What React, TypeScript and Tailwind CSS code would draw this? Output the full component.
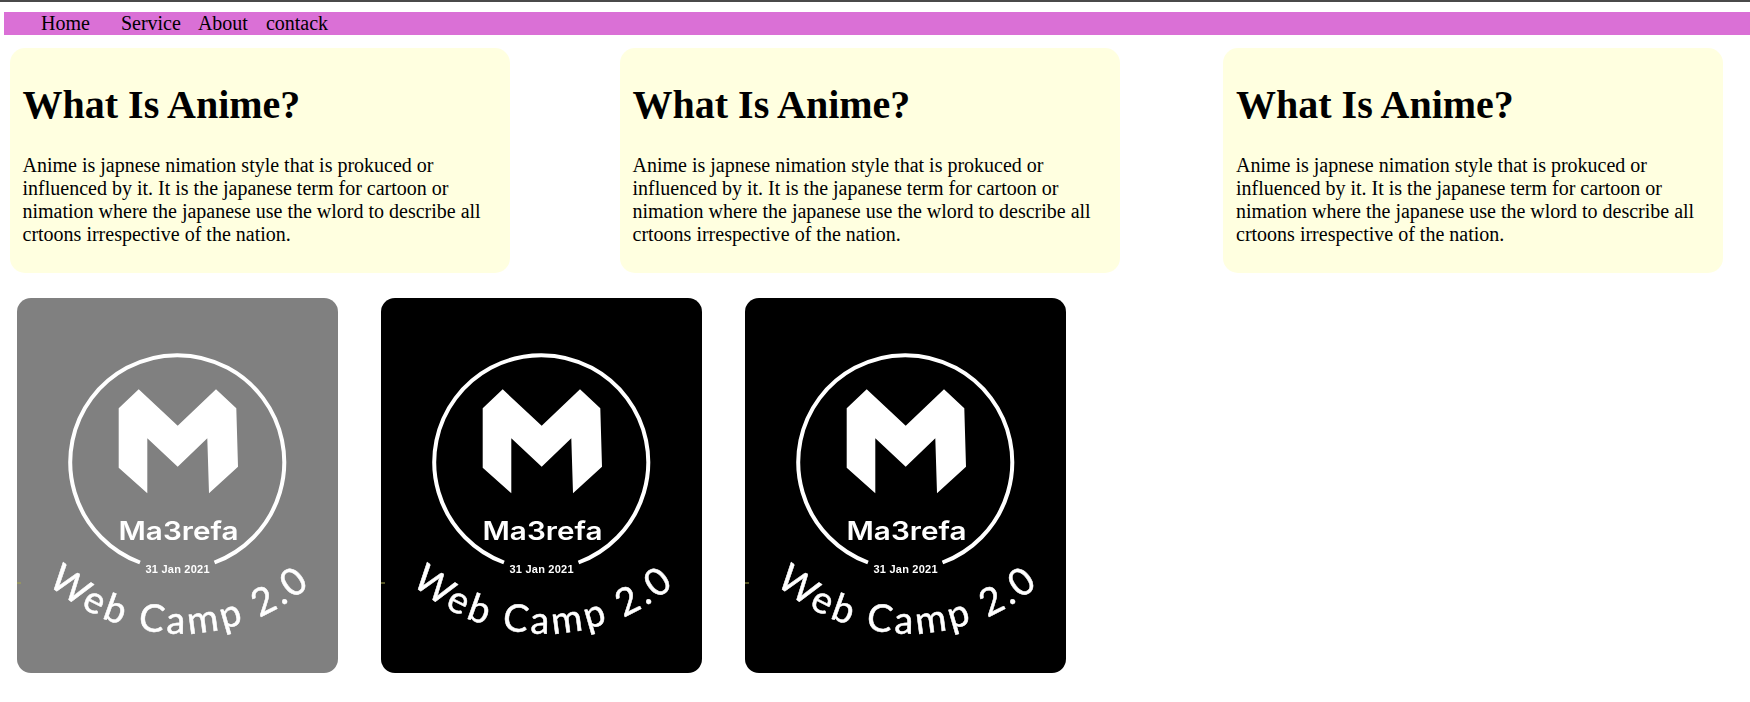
const navItems = [
  { label: "Home", className: "ml-[37px] mr-[31px]" },
  { label: "Service", className: "mr-[17px]" },
  { label: "About", className: "mr-[18px]" },
  { label: "contack", className: "" },
];

const cardOffsets = ["ml-[10px] pl-[12.5px]", "ml-[110px] pl-[12.5px]", "ml-[103px] pl-[13px]"];

function InfoCard({ className }: { className: string }) {
  return (
    <section
      className={`w-[500px] shrink-0 rounded-[15px] bg-[#ffffe0] pr-[13px] pt-[34px] pb-[27px] ${className}`}
    >
      <h1 className="mb-[26px] text-[40px] leading-[46px] font-bold">What Is Anime?</h1>
      <p className="text-[20px] leading-[23px]">
        Anime is japnese nimation style that is prokuced or influenced by it. It is the japanese
        term for cartoon or nimation where the japanese use the wlord to describe all crtoons
        irrespective of the nation.
      </p>
    </section>
  );
}

// badge artwork, coordinates are pixels inside the 321x375 tile
function CampBadge({ id, className }: { id: string; className: string }) {
  return (
    <div className={`h-[375px] w-[321px] shrink-0 overflow-hidden rounded-[14px] ${className}`}>
      <svg viewBox="0 0 321 375" className="block h-full w-full blur-[0.35px]">
        <path
          d="M123 264.5 A107 107 0 1 1 197.5 264.5"
          fill="none"
          stroke="#fff"
          strokeWidth="4"
        />
        <polygon
          fill="#fff"
          points="121.7,91.3 160.7,127.7 199,91.3 219.3,110.3 221,168.7 192,195.3 190.3,140.3 160.7,168.7 130.3,140.3 130.3,195.3 101.7,169.7 101.7,110.3"
        />
        <text
          x="101.5"
          y="242"
          fill="#fff"
          textLength="120"
          lengthAdjust="spacingAndGlyphs"
          className="font-['Inter',sans-serif] text-[25px] font-semibold"
        >
          Ma3refa
        </text>
        <text
          x="128.5"
          y="274.5"
          fill="#fff"
          textLength="64"
          className="font-['Liberation_Sans',sans-serif] text-[11px] font-bold"
        >
          31 Jan 2021
        </text>
        <rect x="0" y="284.5" width="4" height="1" fill="#a8a848" />
        <path id={id} d="M30 285 A200 200 0 0 0 296 285" fill="none" />
        <text
          fill="#fff"
          stroke="#fff"
          strokeWidth="0.5"
          className="font-['Lato',sans-serif] text-[38px] tracking-[3.5px]"
        >
          <textPath href={`#${id}`} startOffset="50%" textAnchor="middle">
            Web Camp 2.0
          </textPath>
        </text>
      </svg>
    </div>
  );
}

export default function App() {
  return (
    <div className="min-h-[702px] bg-white font-['Liberation_Serif',serif] text-black">
      <div className="h-[2px] bg-[#4a4a4a]" />
      <nav className="mt-[10px] ml-[4px] bg-[#da70d6]">
        <ul className="flex text-[20px] leading-[23px]">
          {navItems.map((item) => (
            <li key={item.label} className={item.className}>
              {item.label}
            </li>
          ))}
        </ul>
      </nav>
      <div className="mt-[13px] flex">
        {cardOffsets.map((offset) => (
          <InfoCard key={offset} className={offset} />
        ))}
      </div>
      <div className="mt-[25px] ml-[17px] flex gap-[43px]">
        <CampBadge id="arc-a" className="bg-[#808080]" />
        <CampBadge id="arc-b" className="bg-black" />
        <CampBadge id="arc-c" className="bg-black" />
      </div>
    </div>
  );
}
